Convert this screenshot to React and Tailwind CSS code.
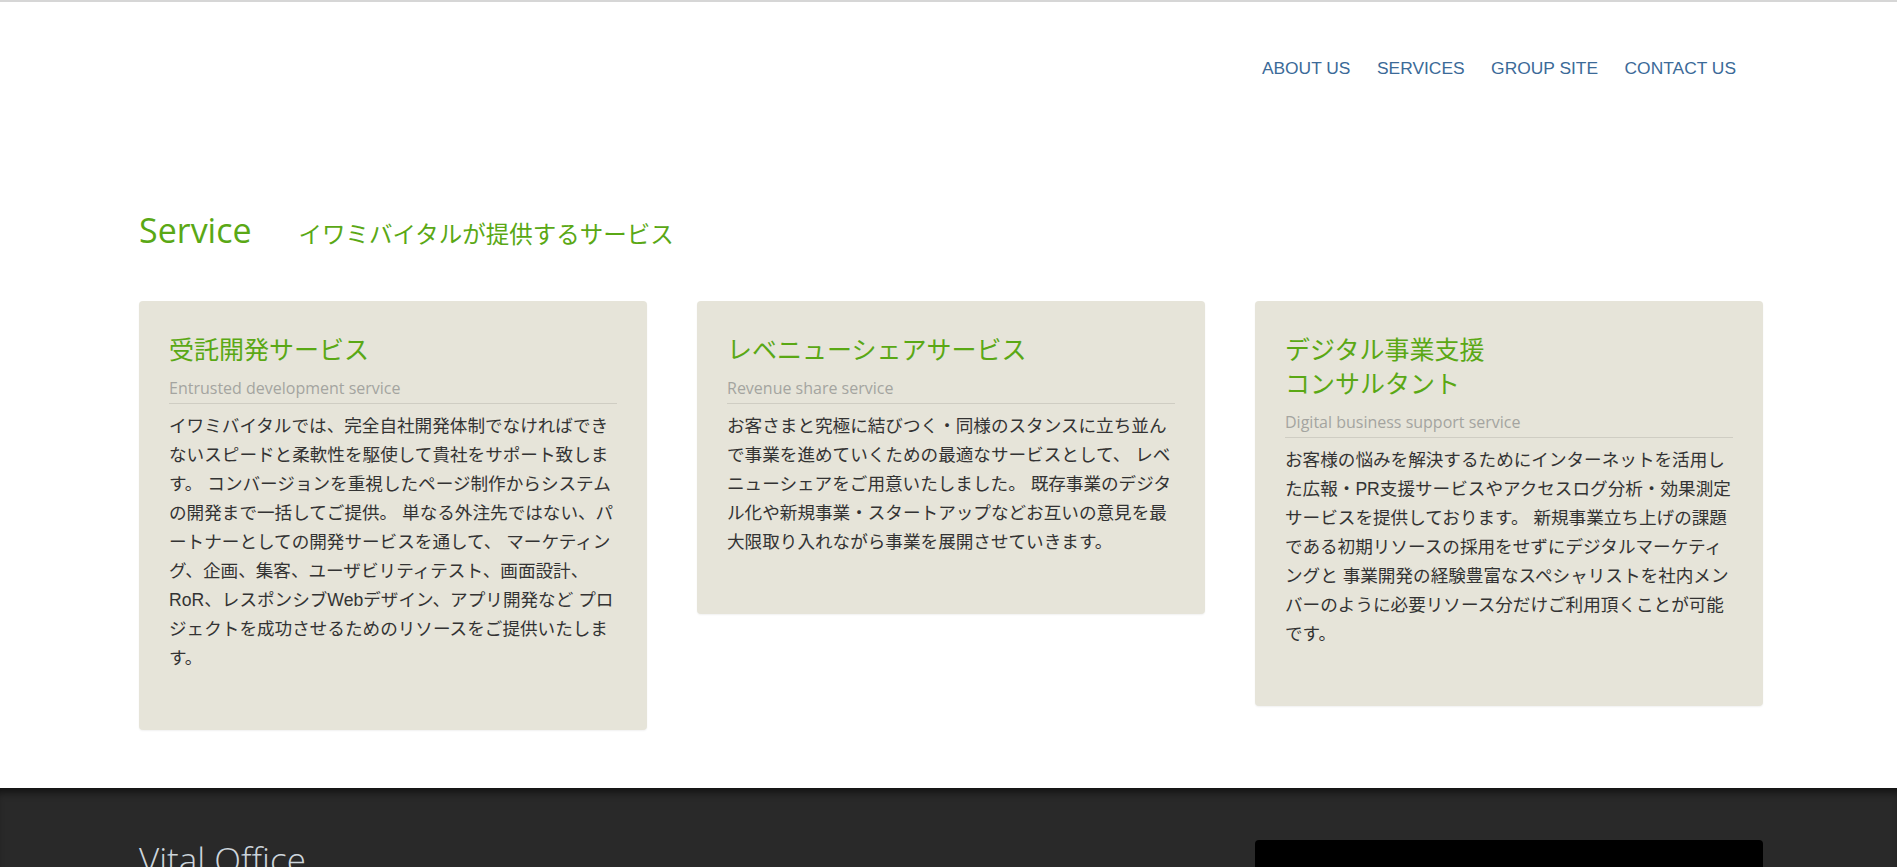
import React from 'react';

const services = [
  {
    title: ['受託開発サービス'],
    sub: 'Entrusted development service',
    body: 'イワミバイタルでは、完全自社開発体制でなければできないスピードと柔軟性を駆使して貴社をサポート致します。 コンバージョンを重視したページ制作からシステムの開発まで一括してご提供。 単なる外注先ではない、パートナーとしての開発サービスを通して、 マーケティング、企画、集客、ユーザビリティテスト、画面設計、RoR、レスポンシブWebデザイン、アプリ開発など プロジェクトを成功させるためのリソースをご提供いたします。',
  },
  {
    title: ['レベニューシェアサービス'],
    sub: 'Revenue share service',
    body: 'お客さまと究極に結びつく・同様のスタンスに立ち並んで事業を進めていくための最適なサービスとして、 レベニューシェアをご用意いたしました。 既存事業のデジタル化や新規事業・スタートアップなどお互いの意見を最大限取り入れながら事業を展開させていきます。',
  },
  {
    title: ['デジタル事業支援', 'コンサルタント'],
    sub: 'Digital business support service',
    body: 'お客様の悩みを解決するためにインターネットを活用した広報・PR支援サービスやアクセスログ分析・効果測定サービスを提供しております。 新規事業立ち上げの課題である初期リソースの採用をせずにデジタルマーケティングと 事業開発の経験豊富なスペシャリストを社内メンバーのように必要リソース分だけご利用頂くことが可能です。',
  },
];

const navItems = ['ABOUT US', 'SERVICES', 'GROUP SITE', 'CONTACT US'];

const ServiceCard = ({ item }) => (
  <div className="rounded-[4px] bg-[#e6e4d9] px-[30px] pt-[30px] pb-[57px] shadow-[0_1px_2px_rgba(0,0,0,0.06)]">
    <h3 className="text-[25px] leading-[34px] text-[#5aa815] font-['Noto_Sans_CJK_JP',sans-serif]">
      {item.title.map((line, i) => (
        <span key={i} className="block">{line}</span>
      ))}
    </h3>
    <p className="mt-[11px] border-b border-[#cfcdc3] pb-[3px] text-[16px] leading-[24px] text-[#a4a4a0] font-['Open_Sans',sans-serif]">
      {item.sub}
    </p>
    <p className="mt-[8px] text-[17.6px] leading-[29px] text-[#333] font-['Liberation_Sans','Noto_Sans_CJK_JP',sans-serif]">
      {item.body}
    </p>
  </div>
);

export default function App() {
  return (
    <div className="h-[867px] overflow-hidden border-t-2 border-[#d6d6d6] bg-white">
      {/* header nav */}
      <header className="flex justify-end pt-[56px] pr-[161px]">
        <nav className="flex gap-[26.5px] text-[17.4px] leading-[20px] text-[#3b6a98] font-['Liberation_Sans',sans-serif]">
          {navItems.map((n) => (
            <a key={n} href="#" className="whitespace-nowrap">{n}</a>
          ))}
        </nav>
      </header>

      {/* service section */}
      <main className="pl-[139px] pr-[134px] pt-[129px] pb-[58px]">
        <div className="flex items-baseline h-[46px]">
          <h2 className="text-[34px] leading-[46px] text-[#5aa815] font-['Open_Sans',sans-serif]">Service</h2>
          <span className="ml-[47px] text-[23.5px] text-[#5aa815] font-['Noto_Sans_CJK_JP',sans-serif]">
            イワミバイタルが提供するサービス
          </span>
        </div>
        <div className="mt-[48px] grid grid-cols-3 items-start gap-[50px]">
          {services.map((s) => (
            <ServiceCard key={s.sub} item={s} />
          ))}
        </div>
      </main>

      {/* footer */}
      <footer className="h-[300px] bg-[#292929] pl-[139px] pr-[134px] pt-[52px] shadow-[inset_0_9px_8px_-5px_rgba(0,0,0,0.6)]">
        <div className="grid grid-cols-3 items-start gap-[50px]">
          <h2 className="mt-[2px] text-[35px] leading-[35px] font-light text-[#cdd5dc] font-['Open_Sans',sans-serif]">
            Vital Office
          </h2>
          <div />
          <div className="h-[200px] rounded-t-[4px] bg-black" />
        </div>
      </footer>
    </div>
  );
}
